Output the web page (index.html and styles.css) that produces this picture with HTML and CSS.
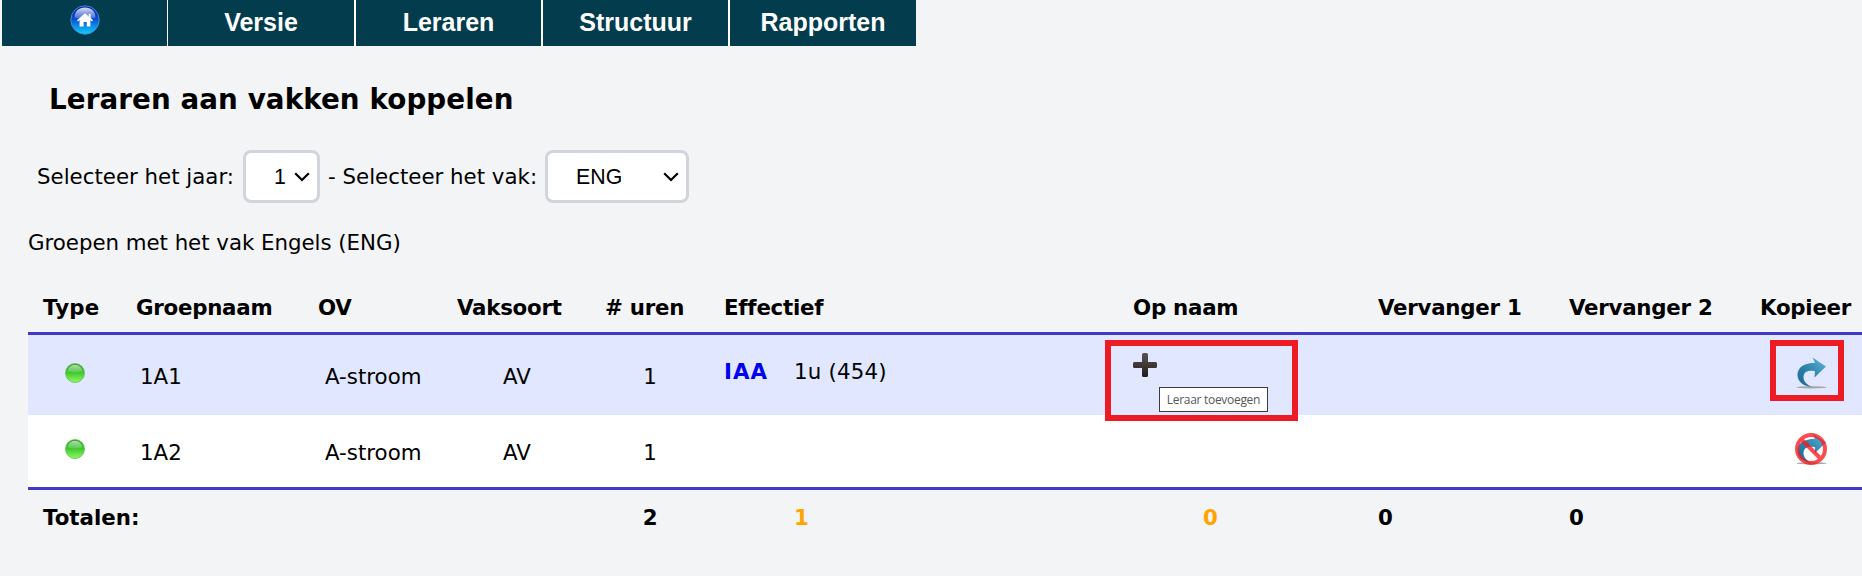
FILE: index.html
```html
<!DOCTYPE html>
<html lang="nl">
<head>
<meta charset="utf-8">
<title>Leraren aan vakken koppelen</title>
<link rel="stylesheet" href="styles.css">
</head>
<body>
<svg class="defs" width="0" height="0" aria-hidden="true">
  <defs>
    <linearGradient id="ballFill" x1="0" y1="0" x2="0" y2="1"><stop offset="0" stop-color="#239c1c"/><stop offset=".45" stop-color="#3cc42c"/><stop offset="1" stop-color="#8dfb62"/></linearGradient>
    <linearGradient id="ballShine" x1="0" y1="0" x2="0" y2="1"><stop offset="0" stop-color="#fff" stop-opacity=".65"/><stop offset="1" stop-color="#fff" stop-opacity=".15"/></linearGradient>
    <linearGradient id="homeFill" x1="0" y1="0" x2="0" y2="1"><stop offset="0" stop-color="#0618a0"/><stop offset=".45" stop-color="#0a4bd0"/><stop offset="1" stop-color="#10d0ff"/></linearGradient>
    <linearGradient id="homeShine" x1="0" y1="0" x2="0" y2="1"><stop offset="0" stop-color="#fff" stop-opacity=".85"/><stop offset="1" stop-color="#fff" stop-opacity=".2"/></linearGradient>
    <linearGradient id="arrowFill" x1="0" y1="1" x2="1" y2="0"><stop offset=".2" stop-color="#22739b"/><stop offset=".5" stop-color="#2f86ae"/><stop offset="1" stop-color="#66b5dd"/></linearGradient>
    <linearGradient id="plusFill" x1="0" y1="0" x2="0" y2="1"><stop offset="0" stop-color="#595554"/><stop offset="1" stop-color="#231a19"/></linearGradient>
    <symbol id="ball" viewBox="0 0 20 20"><circle cx="10" cy="10" r="9.5" fill="url(#ballFill)" stroke="#5fc152" stroke-width=".8"/><path d="M2.6 8.6a7.4 6.9 0 0 1 14.8 0Q10 10.2 2.6 8.6z" fill="url(#ballShine)"/></symbol>
    <symbol id="arrow" viewBox="0 0 32 32"><ellipse cx="16.5" cy="30.3" rx="15" ry="1.1" fill="#a5a5a8"/><path d="M17.500.4 31 9.600 19.500 20.500 20 14.200C12.500 12.800 8.800 15 8.500 20c0 4.500 3.500 8 8.500 9.800C8.500 29.500 2.500 24.500 2.500 18c0-7.500 6.500-12 17.600-12.200z" fill="url(#arrowFill)"/></symbol>
  </defs>
</svg>
<nav class="nav">
  <a class="nav-item nav-home"><svg width="30" height="30" viewBox="0 0 30 30"><circle cx="15" cy="15" r="14.200" fill="url(#homeFill)" stroke="#3a93d3" stroke-width="1"/><path d="M4.500 12.500C4.500 6 9 2.500 15 2.500S25.500 6 25.500 12.500Q15 15.500 4.500 12.500z" fill="url(#homeShine)"/><path d="M15 8.200 7 15.300l1 1.100 1.600-1.300V21.500h4v-4.500h3.200v4.500h3.600v-6.400l1.600 1.300 1-1.100-2.400-2.200V9h-1.900v2.500z" fill="#fff"/></svg></a>
  <a class="nav-item">Versie</a>
  <a class="nav-item">Leraren</a>
  <a class="nav-item">Structuur</a>
  <a class="nav-item">Rapporten</a>
</nav>
<main class="page">
  <h1 class="title">Leraren aan vakken koppelen</h1>
  <div class="filters">
    <span class="label-year">Selecteer het jaar:</span>
    <div class="select select-year"><span>1</span><svg class="chevron" width="16" height="10" viewBox="0 0 16 10"><path d="M1.200 1.200 8 8l6.800-6.800" /></svg></div>
    <span class="label-subject">- Selecteer het vak:</span>
    <div class="select select-subject"><span>ENG</span><svg class="chevron" width="16" height="10" viewBox="0 0 16 10"><path d="M1.200 1.200 8 8l6.800-6.800" /></svg></div>
  </div>
  <p class="caption">Groepen met het vak Engels (ENG)</p>
  <div class="table">
    <div class="row head">
      <span class="head-type">Type</span><span>Groepnaam</span><span class="head-ov">OV</span><span>Vaksoort</span><span># uren</span><span class="head-effective">Effectief</span><span>Op naam</span><span>Vervanger 1</span><span>Vervanger 2</span><span class="head-copy">Kopieer</span>
    </div>
    <div class="row body first">
      <div class="type"><svg width="20" height="20"><use href="#ball"/></svg></div>
      <div class="name">1A1</div>
      <div class="ov">A-stroom</div>
      <div class="center">AV</div>
      <div class="center">1</div>
      <div class="teacher"><b>IAA</b><span>1u (454)</span></div>
      <div class="assign">
        <svg class="plus" width="24" height="24" viewBox="0 0 24 24"><path d="M10.500 0h3Q15 0 15 1.500V9h7.500Q24 9 24 10.500v3Q24 15 22.500 15H15v7.500Q15 24 13.500 24h-3Q9 24 9 22.500V15H1.500Q0 15 0 13.500v-3Q0 9 1.500 9H9V1.500Q9 0 10.500 0z" fill="url(#plusFill)"/></svg>
        <div class="mark mark-assign"></div>
        <div class="tooltip">Leraar toevoegen</div>
      </div>
      <div></div>
      <div></div>
      <div class="copy"><svg width="32" height="32"><use href="#arrow"/></svg><div class="mark mark-copy"></div></div>
    </div>
    <div class="row body second">
      <div class="type"><svg width="20" height="20"><use href="#ball"/></svg></div>
      <div class="name">1A2</div>
      <div class="ov">A-stroom</div>
      <div class="center">AV</div>
      <div class="center">1</div>
      <div></div>
      <div></div>
      <div></div>
      <div></div>
      <div class="copy"><svg width="32" height="32" viewBox="0 0 32 32"><use href="#arrow" width="32" height="32"/><g fill="none" stroke="#f8191d" stroke-opacity=".78" stroke-width="4"><circle cx="16" cy="16" r="14"/><path d="M7.500 7.500 24.500 24.500"/></g></svg></div>
    </div>
    <div class="row foot">
      <span class="total">Totalen:</span><span></span><span></span><span></span><span class="center">2</span><span class="sum-effective">1</span><span class="sum-assigned">0</span><span>0</span><span>0</span><span></span>
    </div>
  </div>
</main>
</body>
</html>
```
FILE: styles.css
```css
* { box-sizing: border-box; }
body {
  margin: 0;
  background: #f3f4f6;
  color: #000;
  font: 21.33px/26px "DejaVu Sans", Verdana, sans-serif;
  overflow: hidden;
}
.defs { position: absolute; }
.nav {
  display: grid;
  grid-template-columns: 165px 187px 187px 187px 188px;
  width: 916px;
  height: 46px;
  padding-left: 2px;
}
.nav-item {
  display: flex;
  justify-content: center;
  background: #023c4d;
  border-left: 2px solid #fff;
  color: #fff;
  font: bold 25px/45px "Liberation Sans", Arial, sans-serif;
}
.nav-item:nth-child(2) { border-left-width: 1px; }
.nav-home { border-left: 0; padding-top: 5px; }
.page { padding-left: 28px; }
.title {
  margin: 0;
  padding: 37px 0 0 21px;
  font-size: 27.76px;
  line-height: 34px;
  letter-spacing: .08px;
}
.filters {
  display: flex;
  align-items: center;
  height: 53px;
  margin-top: 33px;
  padding-left: 9px;
}
.label-year { width: 206px; }
.label-subject { width: 217px; margin-left: 8px; }
.select {
  display: flex;
  align-items: center;
  justify-content: space-between;
  height: 53px;
  border: 3px solid #d1d5db;
  border-radius: 8px;
  background: #fff;
  font-family: "Liberation Sans", Arial, sans-serif;
}
.select-year { width: 77px; padding: 0 7px 0 28px; }
.select-subject { width: 144px; padding: 0 7px 0 28px; }
.chevron { fill: none; stroke: #000; stroke-width: 2.2; }
.caption { margin: 27px 0 0; line-height: 26px; letter-spacing: -.03px; }
.table { margin-top: 35px; }
.row {
  display: grid;
  grid-template-columns: 94px 181px 140px 148px 118px 410px 245px 191px 190px 117px;
}
.row > * { padding-left: 14px; white-space: nowrap; }
.row > .center { padding: 0; text-align: center; }
.head, .foot { font-weight: bold; letter-spacing: -.25px; }
.head { height: 41px; padding-top: 4px; }
.row > .head-type { padding-left: 15px; letter-spacing: .2px; }
.row > .head-ov, .row > .head-effective, .row > .head-copy { padding-left: 15px; }
.first {
  height: 83px;
  padding-top: 29px;
  border-top: 3px solid #4338ca;
  background: #e0e7ff;
}
.second {
  height: 75px;
  padding-top: 25px;
  border-bottom: 3px solid #4338ca;
  background: #fff;
}
.foot { height: 70px; padding-top: 15px; }
.row > .total { padding-left: 15px; letter-spacing: 0; }
.row > .type { padding-left: 37px; }
.type svg { display: block; margin-top: -1px; }
.row > .name { padding-left: 18px; }
.row > .ov { padding-left: 22px; }
.teacher { display: flex; margin-top: -5px; }
.row > .teacher { padding-left: 15px; }
.teacher b { width: 70px; color: #00e; letter-spacing: 1px; }
.teacher span { letter-spacing: .2px; }
.assign { position: relative; }
.plus { display: block; margin-top: -11px; }
.tooltip {
  position: absolute;
  left: 40px;
  top: 23px;
  width: 109px;
  height: 25px;
  border: 1px solid #3c3c3c;
  background: #fff;
  color: #575757;
  font: 12px/24px "Open Sans", "Noto Sans", sans-serif;
  letter-spacing: -.3px;
  text-align: center;
}
.mark { position: absolute; border: 6px solid #ed1c24; }
.mark-assign { left: -14px; top: -24px; width: 193px; height: 81px; }
.mark-copy { left: 25px; top: -24px; width: 74px; height: 61px; }
.copy { position: relative; }
.row > .copy { padding-left: 50px; }
.copy svg { display: block; margin-top: -7px; }
.row > .sum-effective { padding-left: 85px; color: orange; }
.row > .sum-assigned { padding-left: 84px; color: orange; }
```
